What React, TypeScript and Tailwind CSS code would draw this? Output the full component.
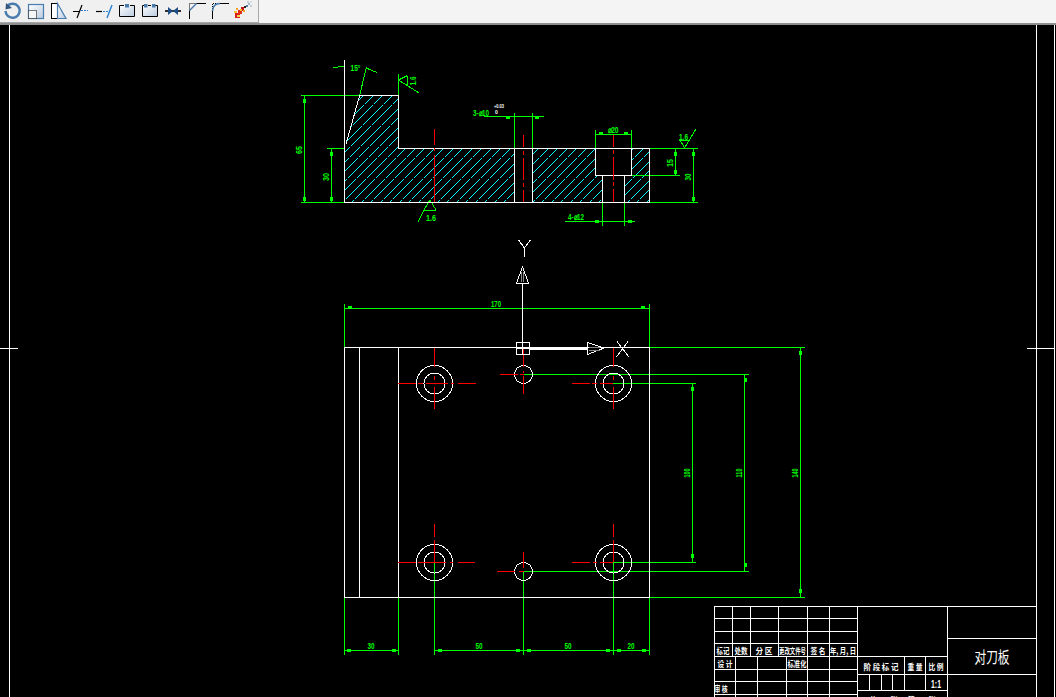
import React from "react";

type Seg = [number, number, number, number];

const W: Seg[] = [
  [344.5, 60, 344.5, 203], [346, 144, 359.5, 96], [359, 95.5, 398, 95.5], [398.5, 95, 398.5, 148],
  [398, 148.5, 650, 148.5], [344, 202.5, 650, 202.5], [649.5, 148, 649.5, 203],
  [514.5, 148, 514.5, 202], [532.5, 148, 532.5, 202], [595.5, 148, 595.5, 175], [631.5, 148, 631.5, 175],
  [595, 175.5, 632, 175.5], [602.5, 175, 602.5, 202], [624.5, 175, 624.5, 202],
  [344, 347.5, 650, 347.5], [344, 597.5, 650, 597.5], [344.5, 347, 344.5, 598], [359.5, 347, 359.5, 597],
  [398.5, 347, 398.5, 597], [649.5, 347, 649.5, 598],
  [522.5, 283, 522.5, 342], [518.5, 240, 524.5, 248], [530.5, 240, 524.5, 248], [524.5, 248, 524.5, 257],
  [617, 341.5, 629, 357], [628, 341.5, 616.5, 357],
];

const G: Seg[] = [
  [301, 95.5, 359, 95.5], [327, 148.5, 344, 148.5], [301, 202.5, 344, 202.5], [304.5, 96, 304.5, 202], [331.5, 148, 331.5, 202],
  [333, 67.5, 344, 66.5], [359.5, 96, 366.5, 67], [366, 68, 377, 72.5],
  [398.5, 74, 398.5, 95], [398.5, 80, 407.5, 75.5], [407.5, 75.5, 407.5, 85], [398.5, 80, 419, 93],
  [424, 210.5, 436, 210.5], [430, 200, 424, 210], [430, 200, 436, 210], [424, 210, 418, 222],
  [484, 116.5, 544, 116.5], [514.5, 113, 514.5, 148], [532.5, 113, 532.5, 148],
  [595, 134.5, 631, 134.5], [595.5, 130, 595.5, 148], [631.5, 130, 631.5, 148],
  [602.5, 202, 602.5, 226], [624.5, 202, 624.5, 226], [565, 221.5, 635, 221.5],
  [631, 148.5, 698, 148.5], [631, 175.5, 680, 175.5], [650, 202.5, 698, 202.5], [675.5, 148, 675.5, 175], [693.5, 148, 693.5, 202],
  [679, 140.5, 690, 140.5], [680, 140, 684.5, 148], [684.5, 148, 696, 129],
  [345, 308.5, 649, 308.5], [344.5, 304, 344.5, 347], [649.5, 304, 649.5, 347],
  [650, 347.5, 805, 347.5], [524, 374.5, 749, 374.5], [613, 383.5, 696, 383.5], [613, 562.5, 696, 562.5],
  [523, 571.5, 749, 571.5], [650, 597.5, 805, 597.5], [692.5, 383, 692.5, 562], [744.5, 374, 744.5, 571], [800.5, 347, 800.5, 597],
  [344, 650.5, 398, 650.5], [434, 650.5, 649, 650.5],
  [344.5, 597, 344.5, 655], [398.5, 597, 398.5, 655], [434.5, 562, 434.5, 655], [523.5, 571, 523.5, 655], [613.5, 562, 613.5, 655], [649.5, 597, 649.5, 655],
];

const R: Seg[] = [
  [434.5, 129, 434.5, 145], [434.5, 148, 434.5, 151], [434.5, 155, 434.5, 202],
  [523.5, 135, 523.5, 147], [523.5, 151, 523.5, 155], [523.5, 158, 523.5, 180], [523.5, 183, 523.5, 187], [523.5, 190, 523.5, 202],
  [613.5, 135, 613.5, 147], [613.5, 150, 613.5, 154], [613.5, 157, 613.5, 180], [613.5, 182, 613.5, 186], [613.5, 189, 613.5, 202],
  [398, 383.5, 416, 383.5], [418, 383.5, 423, 383.5], [426, 383.5, 448, 383.5], [451, 383.5, 454, 383.5], [458, 383.5, 476, 383.5],
  [434.5, 348, 434.5, 367], [434.5, 376, 434.5, 380], [434.5, 387, 434.5, 409],
  [572, 383.5, 590, 383.5], [592, 383.5, 597, 383.5], [600, 383.5, 613, 383.5],
  [613.5, 348, 613.5, 367], [613.5, 376, 613.5, 380], [613.5, 387, 613.5, 409],
  [500, 374.5, 518, 374.5], [520, 374.5, 524, 374.5], [523.5, 348, 523.5, 367], [523.5, 371, 523.5, 373], [523.5, 376, 523.5, 394],
  [398, 562.5, 416, 562.5], [418, 562.5, 446, 562.5], [450, 562.5, 453, 562.5], [458, 562.5, 475, 562.5],
  [434.5, 524, 434.5, 537], [434.5, 540, 434.5, 562],
  [572, 562.5, 590, 562.5], [593, 562.5, 597, 562.5], [600, 562.5, 613, 562.5],
  [613.5, 524, 613.5, 537], [613.5, 540, 613.5, 562],
  [497, 571.5, 515, 571.5], [519, 571.5, 524, 571.5], [523.5, 552, 523.5, 568],
];

const TB: Seg[] = [
  ...[606.5, 618.5, 631.5, 643.5, 656.5, 669.5, 681.5, 694.5].map((y): Seg => [714, y, 858, y]),
  ...[714.5, 732.5, 750.5, 778.5, 807.5, 829.5].map((x): Seg => [x, 606, x, 656]),
  ...[714.5, 735.5, 757.5, 786.5, 807.5, 829.5].map((x): Seg => [x, 656, x, 697]),
  [857.5, 606, 857.5, 697], [947.5, 606, 947.5, 697],
  [858, 606.5, 1036, 606.5], [858, 656.5, 947, 656.5], [858, 674.5, 1036, 674.5], [858, 690.5, 947, 690.5], [947, 638.5, 1036, 638.5],
  [904.5, 656, 904.5, 690], [925.5, 656, 925.5, 690],
  [869.5, 674, 869.5, 690], [881.5, 674, 881.5, 690], [892.5, 674, 892.5, 690],
];

const V_TICKS: [number, number][] = [
  [304.5, 99], [304.5, 197], [331.5, 152], [331.5, 197], [675.5, 152], [675.5, 170], [693.5, 152], [693.5, 197],
  [692.5, 387], [692.5, 554], [745.5, 378], [745.5, 563], [800.5, 351], [800.5, 589],
];
const H_TICKS: [number, number][] = [
  [347, 650.5], [392, 650.5], [438, 650.5], [516, 650.5], [527, 650.5], [606, 650.5], [617, 650.5], [642, 650.5],
  [348, 307.5], [641, 307.5], [595, 221.5], [628, 221.5], [506, 117.5], [535, 117.5], [599, 133.5], [624, 133.5],
];

const HOLES: [number, number, number][] = [
  [434.5, 383.5, 18], [434.5, 383.5, 10.5], [613.5, 383.5, 18], [613.5, 383.5, 10.5],
  [434.5, 562.5, 18], [434.5, 562.5, 10.5], [613.5, 562.5, 18], [613.5, 562.5, 10.5],
  [523.5, 374.5, 9], [523.5, 571.5, 9],
];

const HATCH = Array.from({ length: 50 }, (_, i) => 230 + i * 9.5);

// text, x, baseline y, squeezed width, rotation
const GREEN_TEXT: [string, number, number, number, number?][] = [
  ["65", 302, 150, 8, -90], ["30", 329, 177, 8, -90], ["15°", 355.5, 71, 10], ["3-⌀10", 481, 116, 16], ["⌀20", 613, 133, 11],
  ["4-⌀12", 576, 220, 16], ["15", 673, 163, 8, -90], ["30", 691, 177, 7, -90], ["170", 496, 307, 10],
  ["100", 690, 473, 9, -90], ["110", 742, 473, 9, -90], ["140", 798, 473, 9, -90],
  ["30", 371, 649, 7], ["50", 479, 649, 7], ["50", 568, 649, 7], ["20", 631, 649, 7],
  ["1.6", 416, 81, 9, -90], ["1.6", 431, 221, 10], ["1.6", 683.5, 140, 9],
];

const CJK: [string, number, number, number][] = [
  ["标记", 723, 654, 13], ["处数", 741, 654, 13], ["分 区", 764, 654, 17], ["更改文件号", 792.5, 654, 27], ["签 名", 818, 654, 15], ["年, 月, 日", 843, 654, 26],
  ["设 计", 725, 667, 15], ["标准化", 797, 667, 19], ["审 核", 721, 692, 13],
  ["阶 段 标 记", 881, 670, 35], ["重 量", 915, 670, 15], ["比 例", 936, 670, 15],
  ["共", 873, 703, 7], ["张", 894, 703, 7], ["第", 911, 703, 7], ["张", 932, 703, 7],
];

function Lines({ segs, color }: { segs: Seg[]; color: string }) {
  return (
    <g stroke={color} strokeWidth={1} shapeRendering="crispEdges">
      {segs.map((s, i) => (
        <line key={i} x1={s[0]} y1={s[1]} x2={s[2]} y2={s[3]} />
      ))}
    </g>
  );
}

function Drawing() {
  return (
    <svg viewBox="0 25 1056 672" className="block w-full h-full">
      <defs>
        <clipPath id="hatch">
          <path d="M345 146L359 96H398V149H514V202H345Z" />
          <path d="M533 149H595V176H602V202H533Z" />
          <path d="M632 149H649V202H625V176H632Z" />
        </clipPath>
      </defs>

      <g clipPath="url(#hatch)" stroke="#00ffff" strokeWidth={1} strokeDasharray="14 1" shapeRendering="crispEdges">
        {HATCH.map((x) => (
          <line key={x} x1={Math.round(x)} y1={210} x2={Math.round(x) + 130} y2={80} />
        ))}
      </g>

      <g stroke="#ffffff" strokeWidth={1} shapeRendering="crispEdges">
        <line x1={9.5} y1={25} x2={9.5} y2={697} />
        <line x1={1036.5} y1={25} x2={1036.5} y2={697} />
        <line x1={1054.5} y1={25} x2={1054.5} y2={697} />
        <line x1={0} y1={348.5} x2={18} y2={348.5} />
        <line x1={1027} y1={348.5} x2={1055} y2={348.5} />
      </g>

      <Lines segs={G} color="#00ff00" />
      <Lines segs={W} color="#ffffff" />

      <g fill="none" stroke="#ffffff" strokeWidth={1} shapeRendering="crispEdges">
        {HOLES.map(([x, y, r], i) => (
          <circle key={i} cx={x} cy={y} r={r} />
        ))}
      </g>

      <Lines segs={R} color="#ff0000" />
      <Lines segs={TB} color="#ffffff" />

      <g fill="#00ff00" shapeRendering="crispEdges">
        {V_TICKS.map(([x, y], i) => (
          <rect key={i} x={x - 1.5} y={y} width={3} height={4} />
        ))}
        {H_TICKS.map(([x, y], i) => (
          <rect key={i} x={x} y={y - 1.5} width={4} height={3} />
        ))}
      </g>

      {/* UCS icon */}
      <g fill="none" stroke="#ffffff" strokeWidth={1} shapeRendering="crispEdges">
        <rect x={516.5} y={342.5} width={13} height={12} />
        <path d="M522.5 267L516.5 283H528.5Z" />
        <path d="M587.5 342.5L604 348L587.5 354.5Z" />
        <line x1={516.5} y1={348.5} x2={529.5} y2={348.5} />
        <line x1={522.5} y1={342.5} x2={522.5} y2={354.5} />
        <line x1={529} y1={348.5} x2={588} y2={348.5} strokeWidth={2} />
      </g>
      <g stroke="#8a8a8a" strokeWidth={1} shapeRendering="crispEdges">
        <line x1={521.5} y1={272} x2={521.5} y2={282} />
        <line x1={523.5} y1={272} x2={523.5} y2={282} />
        <line x1={589} y1={347} x2={600} y2={347} />
        <line x1={589} y1={350} x2={600} y2={350} />
      </g>

      <g fill="#00ff00" textAnchor="middle" fontSize={9} fontWeight={700} className="font-['Liberation_Sans',sans-serif]">
        {GREEN_TEXT.map(([t, x, y, w, rot], i) => (
          <text key={i} x={x} y={y} textLength={w} lengthAdjust="spacingAndGlyphs" transform={rot ? `rotate(${rot} ${x} ${y})` : undefined}>
            {t}
          </text>
        ))}
      </g>
      <g fill="#ffffff" fontSize={5} fontWeight={700} className="font-['Liberation_Sans',sans-serif]">
        <text x={494} y={108} textLength={10} lengthAdjust="spacingAndGlyphs">+0.03</text>
        <text x={495} y={114}>0</text>
      </g>

      <g fill="#ffffff" textAnchor="middle" fontSize={8} fontWeight={700} className="font-['Noto_Sans_CJK_SC',sans-serif]">
        {CJK.map(([t, x, y, w], i) => (
          <text key={i} x={x} y={y} textLength={w} lengthAdjust="spacingAndGlyphs">{t}</text>
        ))}
        <text x={936} y={688} fontSize={10} textLength={10} lengthAdjust="spacingAndGlyphs" className="font-['Liberation_Sans',sans-serif]">1:1</text>
        <text x={992} y={663} fontSize={16} textLength={35} lengthAdjust="spacingAndGlyphs" fontWeight={400}>对刀板</text>
      </g>
    </svg>
  );
}

const BLUE = "#4a7cae";

const ICONS: React.ReactNode[] = [
  <g key="rotate">
    <path d="M7 6.5A7 7 0 1 1 5.6 11" fill="none" stroke={BLUE} strokeWidth={2.4} />
    <path d="M6 3L12 8L5.5 9.5Z" fill="#35597f" />
  </g>,
  <g key="scale">
    <rect x={5.5} y={4.5} width={15} height={14} fill="url(#ico)" stroke={BLUE} strokeWidth={1.2} />
    <rect x={5.5} y={10.5} width={8} height={8} fill="#f4f6f8" stroke="#000" strokeDasharray="1 1" />
  </g>,
  <g key="stretch">
    <rect x={5.5} y={3.5} width={6} height={15} fill="#fff" stroke="#000" />
    <path d="M11.5 3.5L20 18.5H11.5Z" fill="url(#ico)" stroke={BLUE} strokeWidth={1.2} />
  </g>,
  <g key="trim">
    <path d="M4 11.5H10M8 18L13 5" stroke="#000" strokeWidth={1.2} fill="none" />
    <path d="M12 10.5H19" stroke="#2a7fd0" strokeWidth={1.2} strokeDasharray="2 1" fill="none" />
  </g>,
  <g key="extend">
    <path d="M4 11.5H10" stroke="#000" strokeWidth={1.2} fill="none" />
    <path d="M11 11.5H16" stroke="#2a7fd0" strokeWidth={1.2} strokeDasharray="2 1" fill="none" />
    <path d="M15 18L20 5" stroke="#2a7fd0" strokeWidth={1.4} fill="none" />
  </g>,
  <g key="breakpt">
    <rect x={4.5} y={5.5} width={15} height={11} fill="url(#ico)" stroke="none" />
    <path d="M9 5.5H4.5V16.5H19.5V5.5H15" fill="none" stroke="#000" />
    <rect x={10} y={4} width={4} height={3.5} fill={BLUE} />
  </g>,
  <g key="break">
    <rect x={4.5} y={5.5} width={15} height={11} fill="url(#ico)" />
    <path d="M6 5.5H4.5V16.5H19.5V5.5H17M10 5.5H13" fill="none" stroke="#000" />
    <rect x={6} y={4} width={3.5} height={3.5} fill={BLUE} />
    <rect x={14} y={4} width={3.5} height={3.5} fill={BLUE} />
  </g>,
  <g key="join">
    <path d="M4 11H20" stroke="#000" strokeWidth={1.6} />
    <path d="M7 7L12 11L7 15ZM17 7L12 11L17 15Z" fill="#1d4f86" />
  </g>,
  <g key="chamfer">
    <path d="M5.5 19V10.5" stroke="#000" />
    <path d="M5.5 10.5V3.5H12" stroke="#000" strokeDasharray="1 1" fill="none" />
    <path d="M5.5 10.5L12.5 3.5" stroke={BLUE} strokeWidth={1.4} />
    <path d="M12.5 3.5H22" stroke="#000" />
  </g>,
  <g key="fillet">
    <path d="M5.5 19V11" stroke="#000" />
    <path d="M5.5 11V3.5H12" stroke="#000" strokeDasharray="1 1" fill="none" />
    <path d="M5.5 11Q6 3.5 13 3.5" stroke={BLUE} strokeWidth={1.6} fill="none" />
    <path d="M13 3.5H22" stroke="#000" />
  </g>,
  <g key="explode" shapeRendering="crispEdges">
    <rect x={5} y={13} width={5} height={5} fill="#d81e1e" />
    <rect x={8} y={10} width={4} height={4} fill="#e52a1c" />
    <rect x={11} y={7} width={3} height={4} fill="#c81a1a" />
    <rect x={4} y={11} width={3} height={2} fill="#f4c430" />
    <rect x={7} y={15} width={3} height={2} fill="#f7d848" />
    <rect x={10} y={9} width={2} height={2} fill="#f4c430" />
    <rect x={6} y={8} width={2} height={2} fill="#f0a020" />
    <rect x={13} y={10} width={2} height={2} fill="#f0a020" />
    <rect x={14} y={6} width={2} height={2} fill="#222222" />
    <rect x={16} y={5} width={2} height={2} fill="#5f7fa5" />
    <rect x={18} y={3} width={2} height={2} fill="#a9b8c8" />
    <rect x={20} y={1} width={2} height={2} fill="#d3dbe4" />
    <rect x={17} y={1} width={2} height={2} fill="#c3ced9" />
    <rect x={20} y={5} width={2} height={2} fill="#c3ced9" />
  </g>,
];

function ToolBar() {
  return (
    <div className="shrink-0 h-[25px] flex flex-col bg-white">
      <div className="h-[23px] flex">
        <div className="w-[259px] h-full flex bg-[#f0f0f0] border-r border-b border-[#a8a8a8]">
          {ICONS.map((icon, i) => (
            <svg key={i} width={23} height={23} viewBox="0 0 23 23" className="shrink-0">
              <defs>
                <linearGradient id="ico" x1="0" y1="0" x2="1" y2="1">
                  <stop offset="0" stopColor="#ffffff" />
                  <stop offset="1" stopColor="#b9cbe0" />
                </linearGradient>
              </defs>
              {icon}
            </svg>
          ))}
        </div>
        <div className="flex-1 bg-[#f4f4f4]" />
      </div>
      <div className="h-[2px] bg-[#8f8f8f]" />
    </div>
  );
}

export default function App() {
  return (
    <div className="w-[1056px] h-[697px] flex flex-col bg-black overflow-hidden">
      <ToolBar />
      <div className="flex-1 min-h-0">
        <Drawing />
      </div>
    </div>
  );
}
